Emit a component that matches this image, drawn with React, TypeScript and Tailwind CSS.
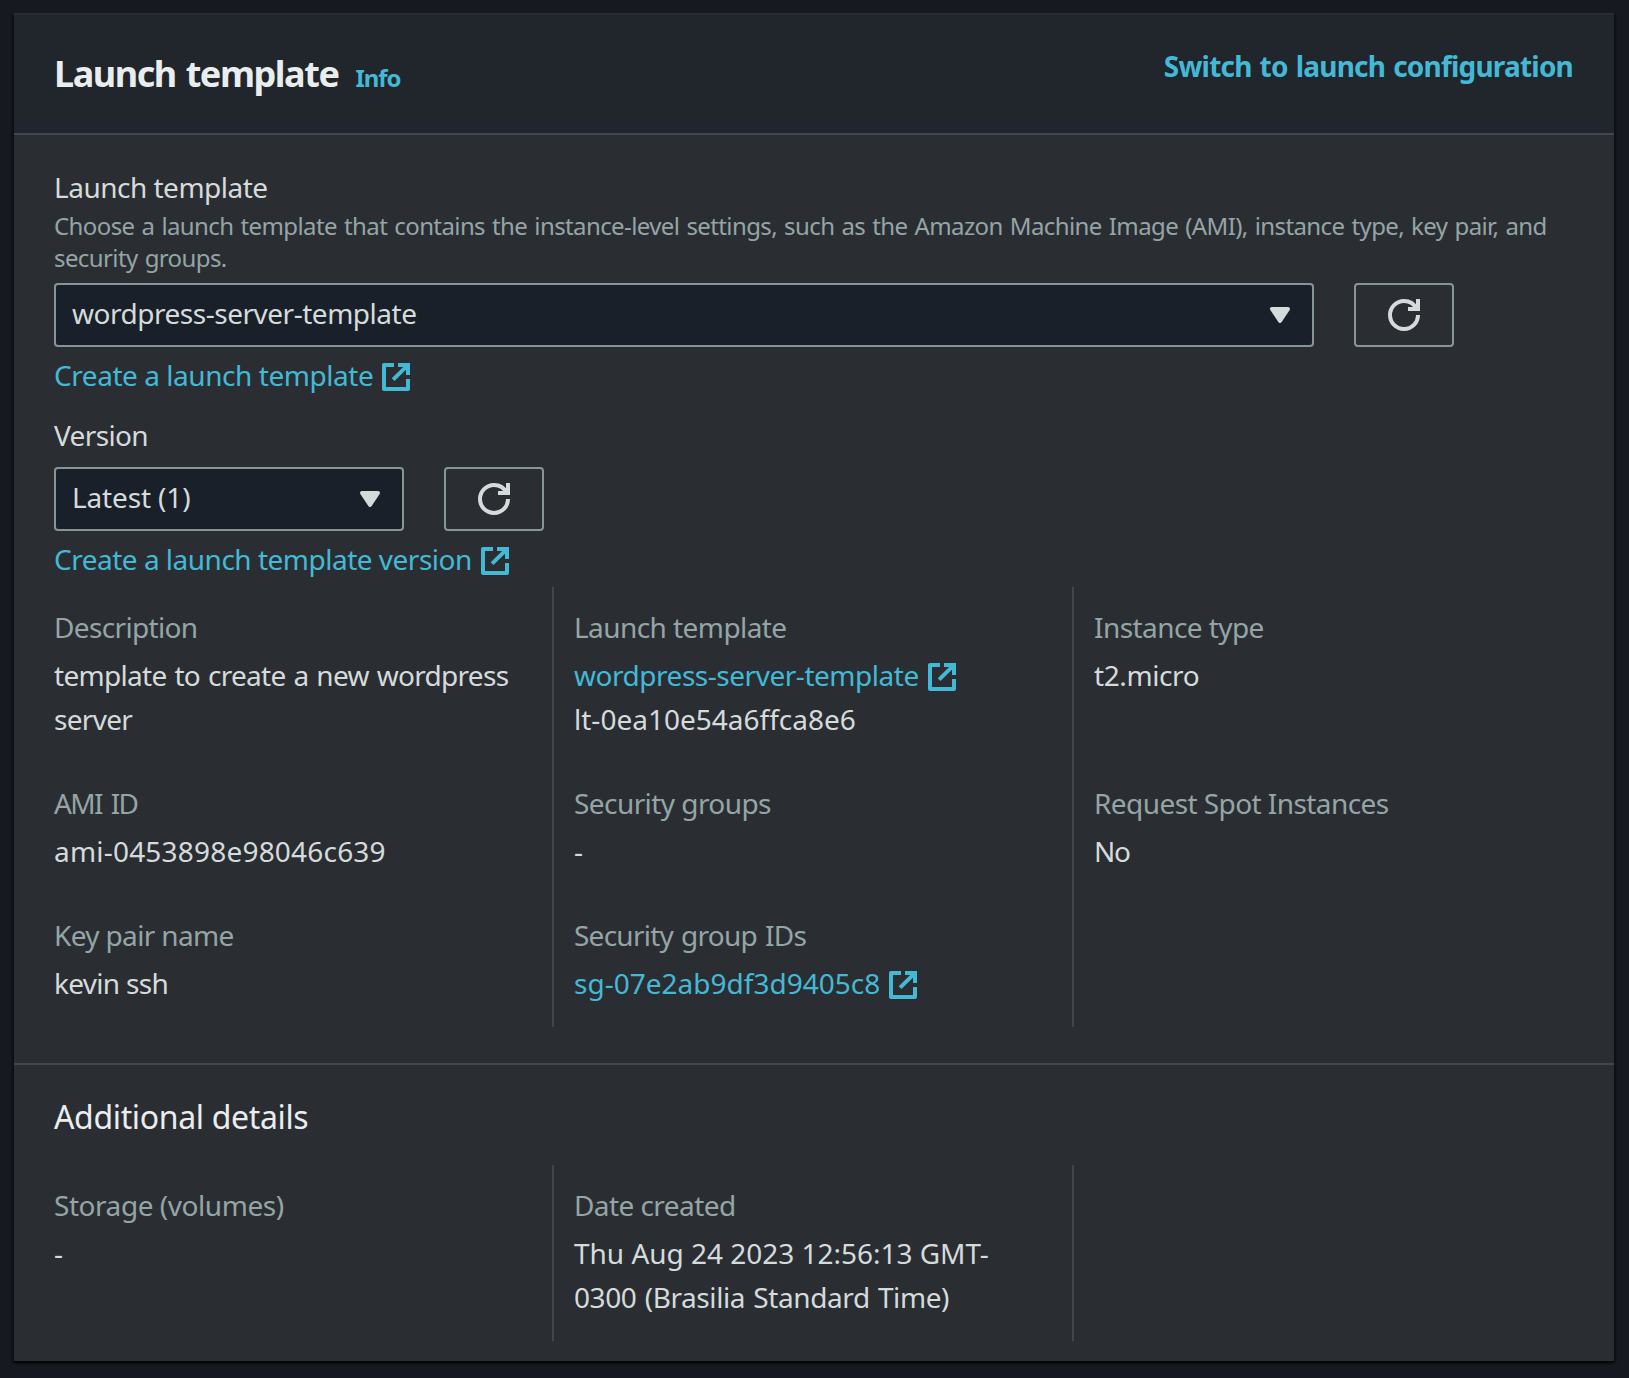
import React from 'react'
import clsx from 'clsx'

function ExternalIcon() {
  return (
    <svg viewBox="0 0 16 16" className="mt-1 size-8 shrink-0" fill="none" stroke="currentColor" strokeWidth="2" strokeLinejoin="round">
      <path d="M9 2h5v5" strokeLinejoin="miter" />
      <path d="M6.55 9.3 13.8 2.2" />
      <path d="M14 9v5H2V2h5" />
    </svg>
  )
}

function RefreshButton() {
  return (
    <button className="flex h-16 w-[100px] items-center justify-center rounded-[4px] border-2 border-[#879596]" aria-label="Refresh">
      <svg viewBox="0 0 16 16" className="size-8" fill="none" stroke="#d5dbdb" strokeWidth="2">
        <path d="M10 5h5V0" />
        <path d="M15 8a7 7 0 1 1-7-7c2.79 0 5.2 1.63 6.33 4" />
      </svg>
    </button>
  )
}

function Select({ label, className }: { label: string; className: string }) {
  return (
    <div className={clsx('flex h-16 items-center justify-between rounded-[4px] border-2 border-[#879596] bg-[#1a2029] pr-4 pl-4', className)}>
      <span className="pb-1">{label}</span>
      <svg viewBox="0 0 16 16" className="size-8" fill="#d5dbdb" stroke="#d5dbdb" strokeWidth="2" strokeLinejoin="round">
        <path d="M4 5h8l-4 6z" />
      </svg>
    </div>
  )
}

function ExternalLink({ text, className }: { text: string; className?: string }) {
  return (
    <a className={clsx('flex h-11 items-center gap-[7px] text-[#44b9d6]', className)}>
      <span>{text}</span>
      <ExternalIcon />
    </a>
  )
}

type Line = { text: string; link?: boolean; tracking?: string }
type Detail = { label: string; labelTracking?: string; lines: Line[] }

const summary: (Detail | null)[] = [
  {
    label: 'Description',
    labelTracking: 'tracking-[-0.65px]',
    lines: [
      { text: 'template to create a new wordpress', tracking: 'tracking-[-0.7px] [word-spacing:1.3px]' },
      { text: 'server', tracking: 'tracking-[-0.7px]' },
    ],
  },
  {
    label: 'Launch template',
    lines: [
      { text: 'wordpress-server-template', link: true, tracking: 'tracking-[-0.47px]' },
      { text: 'lt-0ea10e54a6ffca8e6', tracking: 'tracking-[0.01px]' },
    ],
  },
  { label: 'Instance type', lines: [{ text: 't2.micro', tracking: 'tracking-[-0.4px]' }] },
  {
    label: 'AMI ID',
    labelTracking: 'tracking-[-1.6px] [word-spacing:3px]',
    lines: [{ text: 'ami-0453898e98046c639', tracking: 'tracking-[0.2px]' }],
  },
  { label: 'Security groups', lines: [{ text: '-' }] },
  { label: 'Request Spot Instances', lines: [{ text: 'No', tracking: 'tracking-[-1.2px]' }] },
  { label: 'Key pair name', labelTracking: 'tracking-[-0.65px]', lines: [{ text: 'kevin ssh', tracking: 'tracking-[-0.7px]' }] },
  {
    label: 'Security group IDs',
    labelTracking: 'tracking-[-0.75px] [word-spacing:1.5px]',
    lines: [{ text: 'sg-07e2ab9df3d9405c8', link: true, tracking: 'tracking-[0.01px]' }],
  },
  null,
]

const additional: (Detail | null)[] = [
  { label: 'Storage (volumes)', labelTracking: 'tracking-[-0.45px]', lines: [{ text: '-' }] },
  {
    label: 'Date created',
    lines: [
      { text: 'Thu Aug 24 2023 12:56:13 GMT-', tracking: 'tracking-[-0.02px]' },
      { text: '0300 (Brasilia Standard Time)', tracking: 'tracking-[-0.4px] [word-spacing:1.3px]' },
    ],
  },
  null,
]

function DetailGrid({ items, className }: { items: (Detail | null)[]; className: string }) {
  return (
    <div className={clsx('grid grid-cols-[498px_520px_1fr]', className)}>
      {items.map((item, i) => (
        <div key={i} className={clsx('pt-[18px] pb-[22px]', i % 3 !== 0 && 'border-l-2 border-[#414750] pl-5')}>
          {item && (
            <>
              <div className={clsx('mb-1 text-[#95a5a6]', item.labelTracking ?? 'tracking-[-0.57px]')}>{item.label}</div>
              {item.lines.map((line) =>
                line.link ? (
                  <ExternalLink key={line.text} text={line.text} className={line.tracking} />
                ) : (
                  <div key={line.text} className={line.tracking}>
                    {line.text}
                  </div>
                ),
              )}
            </>
          )}
        </div>
      ))}
    </div>
  )
}

export default function App() {
  return (
    <div className="h-[1378px] overflow-hidden bg-[#16191f] pt-[13px] pr-[15px] pl-[14px] font-['Noto_Sans',sans-serif] text-[28px] leading-[44px] tracking-[-0.48px] whitespace-nowrap text-[#d5dbdb]">
      <section className="h-[1348px] bg-[#2a2e33] shadow-[0_2px_2px_rgba(0,0,0,0.5),2px_2px_2px_rgba(0,0,0,0.3),-2px_2px_2px_rgba(0,0,0,0.3)]">
        <header className="flex h-[122px] items-start justify-between border-t-2 border-b-2 border-t-[#2a2e33] border-b-[#414750] bg-[#21252c] px-10">
          <div className="flex items-baseline gap-[17px] pt-[37px] font-bold">
            <h1 className="text-[36px] leading-[44px] tracking-[-1.45px] text-[#eaeded] [word-spacing:2px]">Launch template</h1>
            <a className="text-[24px] tracking-[-1.1px] text-[#44b9d6]">Info</a>
          </div>
          <a className="pt-[29px] pr-px font-bold tracking-[-0.8px] text-[#44b9d6] [word-spacing:1.6px]">Switch to launch configuration</a>
        </header>

        <div className="px-10 pt-[30px]">
          <div className="tracking-[-0.5px]">Launch template</div>
          <p className="mt-px text-[24px] leading-8 tracking-[-0.6px] text-[#95a5a6] [word-spacing:1.4px]">
            Choose a launch template that contains the instance-level settings, such as the Amazon Machine Image (AMI), instance type, key pair, and
            <br />
            security groups.
          </p>
          <div className="mt-[9px] flex gap-10">
            <Select label="wordpress-server-template" className="w-[1260px]" />
            <RefreshButton />
          </div>
          <ExternalLink text="Create a launch template" className="mt-1.5 tracking-[-0.45px]" />

          <div className="mt-4 tracking-[-0.65px]">Version</div>
          <div className="mt-2.5 flex gap-10">
            <Select label="Latest (1)" className="w-[350px] tracking-[-0.15px]" />
            <RefreshButton />
          </div>
          <ExternalLink text="Create a launch template version" className="mt-1.5 tracking-[-0.5px]" />

          <DetailGrid items={summary} className="mt-1.5" />
        </div>

        <div className="mt-9 border-t-2 border-[#414750] px-10 pt-8">
          <h2 className="text-[32px] leading-10 tracking-[-0.35px] text-[#eaeded]">Additional details</h2>
          <DetailGrid items={additional} className="mt-7" />
        </div>
      </section>
    </div>
  )
}
